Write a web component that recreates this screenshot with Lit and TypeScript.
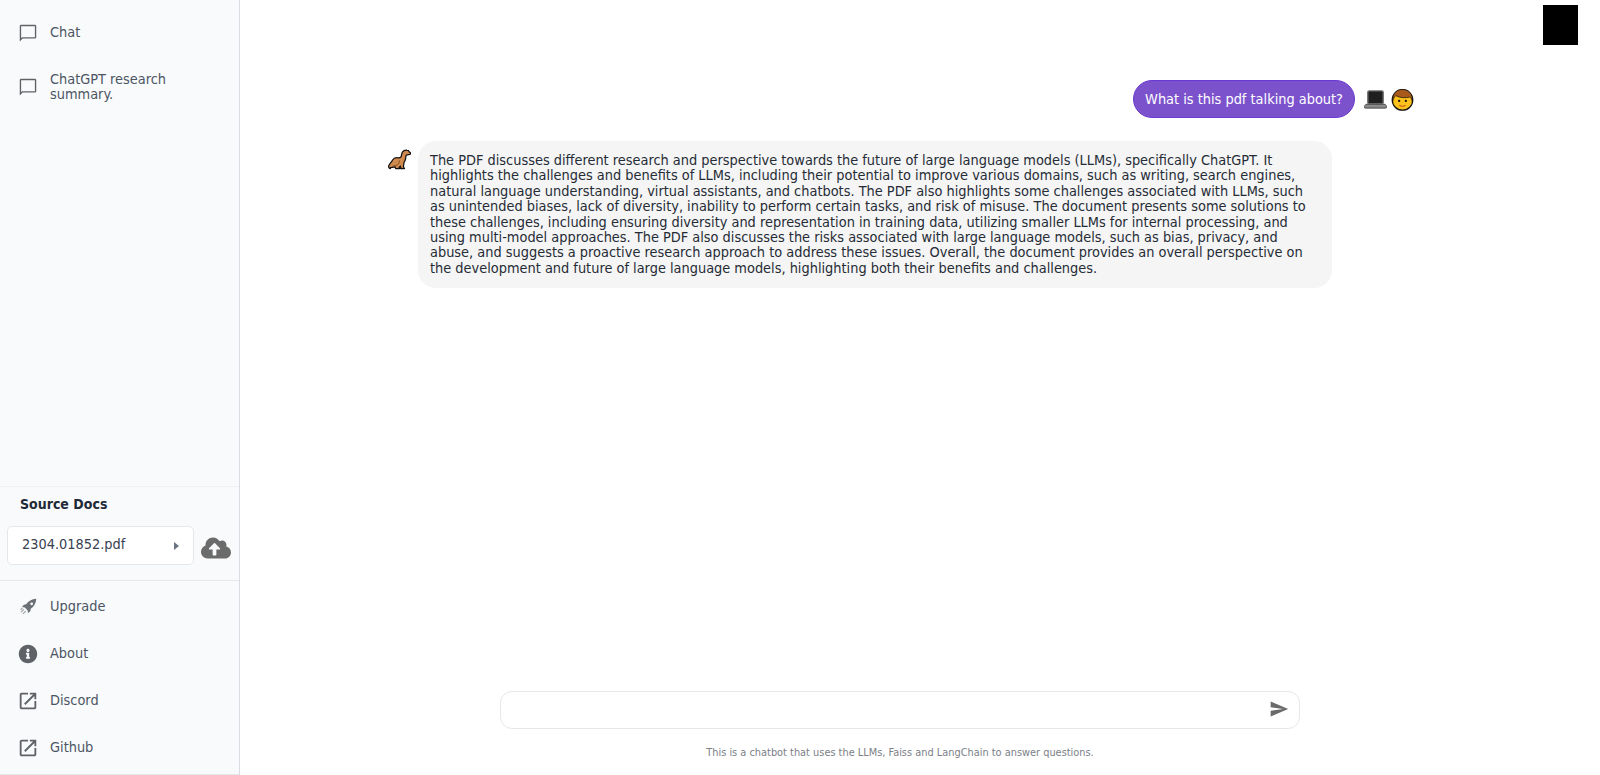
import { LitElement, html, css, svg } from "lit";
import { customElement } from "lit/decorators.js";

const icon = (d: string, vb = "0 0 24 24", cls = "ic") =>
  html`<svg class=${cls} viewBox=${vb} fill="currentColor"><path d=${d}></path></svg>`;

const CHAT = "M3 4.500C3 3.700 3.700 3 4.500 3h15c.8 0 1.500.7 1.500 1.500v12c0 .8-.7 1.500-1.500 1.500H6.200L3 21.200V4.500zM4.500 4.500v13l1.200-1h13.800v-12H4.500z";
const EXT = "M19 19H5V5h7V3H5c-1.110 0-2 .9-2 2v14c0 1.100.89 2 2 2h14c1.100 0 2-.9 2-2v-7h-2v7zM14 3v2h3.590l-9.830 9.830 1.410 1.410L19 6.410V10h2V3h-7z";
const INFO = "M256 8C119 8 8 119.100 8 256c0 137 111 248 248 248s248-111 248-248C504 119.100 393 8 256 8zm0 110c23.200 0 42 18.800 42 42s-18.800 42-42 42-42-18.800-42-42 18.800-42 42-42zm56 254c0 6.600-5.400 12-12 12h-88c-6.600 0-12-5.400-12-12v-24c0-6.600 5.400-12 12-12h12v-64h-12c-6.600 0-12-5.400-12-12v-24c0-6.600 5.400-12 12-12h64c6.600 0 12 5.400 12 12v100h12c6.600 0 12 5.400 12 12v24z";
const CLOUD = "M537.600 226.600c4.100-10.700 6.400-22.400 6.400-34.600 0-53-43-96-96-96-19.700 0-38.100 6-53.300 16.200C367 64.200 315.300 32 256 32c-88.400 0-160 71.600-160 160 0 2.700.1 5.400.2 8.100C40.200 219.800 0 273.200 0 336c0 79.500 64.500 144 144 144h368c70.700 0 128-57.300 128-128 0-61.900-44-113.600-102.400-125.400zM393.400 288H328v112c0 8.800-7.200 16-16 16h-48c-8.800 0-16-7.200-16-16V288h-65.400c-14.300 0-21.400-17.200-11.300-27.300l105.400-105.400c6.200-6.200 16.400-6.200 22.600 0l105.400 105.400c10.100 10.100 2.900 27.300-11.300 27.300z";
const SEND = "M2.010 21L23 12 2.010 3 2 10l15 2-15 2z";

const rocket = html`<svg class="ic rocket" viewBox="0 0 24 24">
  <path fill="currentColor" fill-rule="evenodd" d="M20.800 3C16 3.500 12.500 5.500 10 9L7.500 9.500 5.500 12l3 .5 3 3 .5 3 2.500-2 .5-2.500c3.500-2.500 5.500-6 6-10.500zM16 7a1.500 1.500 0 1 1 0 3 1.500 1.500 0 0 1 0-3z"></path>
  <path fill="none" stroke="currentColor" stroke-width="1.200" opacity=".65" d="M7.500 14.500l-3 3M9.500 16.500l-3 3M6 13l-2 2"></path>
</svg>`;

const laptop = svg`<rect x="4" y="3" width="16" height="13.500" rx="1.500" fill="#1f1f1f" stroke="#6b6b6b" stroke-width="1.500"/><path d="M2 17h20l2 2.500c0 .8-.6 1.500-1.500 1.500h-21C.6 21 0 20.300 0 19.500z" fill="#8a8a8a" stroke="#333" stroke-width=".8"/>`;
const boy = svg`<circle cx="12" cy="12.500" r="10.700" fill="#fcc21b" stroke="#111" stroke-width="1.300"/><path d="M1.800 14C.8 6 6 1.500 12 1.500S23.200 6 22.200 14c-.4-2-1-3.500-2.400-4.500C16 10.500 9 10.500 5 8 3.200 9.500 2.300 11.500 1.800 14z" fill="#a8591c" stroke="#111" stroke-width=".7"/><circle cx="8.500" cy="13.500" r="1.200" fill="#111"/><circle cx="15.500" cy="13.500" r="1.200" fill="#111"/><path d="M8.800 18c2 1.300 4.400 1.300 6.400 0" fill="none" stroke="#c0571b" stroke-width="1.200"/>`;
const dino = svg`<path d="M2.500 21.500c-1.800-.4-2.300-2.300-1.500-3.500 1.200-1.800 2.800-3.700 3.800-5.500C6 10.500 8 9.800 10.500 10.300c1.500.3 2.500-.3 3.200-1.300.6-1.500.4-3.200 1.300-4.700C16 2.800 18 2 19.800 2.200c1.400.1 2.100 1 2.500 1.900l1.200.9c.4.800 0 1.500-.9 1.700l-3.600.7c-.6 1.700-.3 3.600-1.100 5.300-.4 1-.7 1.500-1.100 2l-.3 1.800c-.2 1.300-.4 2.500-.3 3.500l1 1.500h-3.700l-.5-2.500-1.500 1 .7 1.500H8l-.5-1.800c-1.500.4-3.300.8-5 .8z" fill="#d08a4e" stroke="#111" stroke-width="1.300" stroke-linejoin="round"/><path d="M4.500 19c2-.5 5-.5 6.500-2.500 1-1.300.5-2.500 1-3.500" fill="none" stroke="#7a4a22" stroke-width="1"/>`;

@customElement("app-root")
export class AppRoot extends LitElement {
  static styles = css`
    :host { display: flex; height: 775px; overflow: hidden; background: #fff;
      font-family: "DejaVu Sans Condensed", "DejaVu Sans", sans-serif; font-size: 14.400px; color: #1f2937; position: relative; }
    * { box-sizing: border-box; }
    .side { width: 240px; flex: none; background: #f9fafb; border-right: 1px solid #d9dde3; display: flex; flex-direction: column; height: 775px; }
    .threads { flex: 1; padding-top: 9px; display: flex; flex-direction: column; }
    .item { display: flex; align-items: center; gap: 11px; padding: 0 17px; height: 47px; color: #4b5563; line-height: 15px; flex: none; }
    .item.tall { height: 61px; }
    .ic { width: 22px; height: 22px; flex: none; color: #5f6368; }
    .rocket { color: #6b6f76; }
    .docs { border-top: 1px solid #f0f1f4; height: 94px; padding: 0 7px; flex: none; }
    .docs h4 { margin: 0; padding: 9px 13px 0; height: 39px; font-size: 14px; font-weight: 700; color: #1f2937; line-height: 16px; }
    .row { display: flex; align-items: center; gap: 7px; }
    .select { width: 187px; height: 39px; background: #fff; border: 1px solid #e5e7eb; border-radius: 5px; display: flex; align-items: center; justify-content: space-between; padding: 0 14px 3px; color: #374151; }
    .tri { width: 0; height: 0; border-left: 5px solid #6b7280; border-top: 4.500px solid transparent; border-bottom: 4.500px solid transparent; margin-top: 3px; }
    .cloud { width: 30px; height: 24px; color: #6b6b6b; margin-top: 5px; flex: none; }
    .links { border-top: 1.500px solid #e5e7eb; padding-top: 2px; flex: none; height: 195px; border-bottom: 1px solid #e5e7eb; }
    .main { width: 1320px; flex: none; display: flex; flex-direction: column; }
    .log { flex: 1; padding-top: 80px; display: flex; flex-direction: column; align-items: center; }
    .wrap { width: 1030px; display: flex; flex-direction: column; gap: 23px; }
    .user { display: flex; justify-content: flex-end; gap: 9px; align-items: center; padding-right: 1px; }
    .ubub { background: #7c52cc; border: 1px solid #6a3bd0; color: #fff; border-radius: 19px; height: 38px; padding: 0 11px; display: flex; align-items: center; white-space: nowrap; }
    .emo { display: flex; gap: 4px; align-items: center; }
    .emo svg, .bot > svg { width: 23px; height: 23px; flex: none; }
    .bot { display: flex; gap: 7px; align-items: flex-start; padding-left: 3px; }
    .bot > svg { margin-top: 7px; }
    .bbub { width: 914px; background: #f5f5f5; border-radius: 18px; padding: 12px; line-height: 15.400px; color: #262c36; height: 147px; white-space: nowrap; }
    .foot { flex: none; height: 84px; display: flex; flex-direction: column; align-items: center; }
    .input { width: 800px; height: 38px; border: 1px solid #e5e7eb; border-radius: 12px; display: flex; align-items: center; justify-content: flex-end; padding: 0 10px 2px 0; background: #fff; flex: none; }
    .input svg { width: 20px; height: 20px; color: #6b6b6b; }
    .note { margin-top: 17px; font-size: 10.900px; line-height: 14px; color: #7b8088; }
    .sq { position: absolute; top: 5px; left: 1543px; width: 35px; height: 40px; background: #000; }
  `;

  render() {
    return html`
      <aside class="side">
        <div class="threads">
          <div class="item">${icon(CHAT)}<span>Chat</span></div>
          <div class="item tall">${icon(CHAT)}<span>ChatGPT research<br />summary.</span></div>
        </div>
        <div class="docs">
          <h4>Source Docs</h4>
          <div class="row">
            <div class="select"><span>2304.01852.pdf</span><i class="tri"></i></div>
            ${icon(CLOUD, "0 0 640 512", "cloud")}
          </div>
        </div>
        <div class="links">
          <div class="item">${rocket}<span>Upgrade</span></div>
          <div class="item">${icon(INFO, "-40 -40 592 592")}<span>About</span></div>
          <div class="item">${icon(EXT)}<span>Discord</span></div>
          <div class="item">${icon(EXT)}<span>Github</span></div>
        </div>
      </aside>
      <main class="main">
        <div class="log">
          <div class="wrap">
            <div class="user">
              <div class="ubub">What is this pdf talking about?</div>
              <div class="emo">
                <svg viewBox="0 0 24 24">${laptop}</svg>
                <svg viewBox="0 0 24 24">${boy}</svg>
              </div>
            </div>
            <div class="bot">
              <svg viewBox="0 0 24 24">${dino}</svg>
              <div class="bbub">
                The PDF discusses different research and perspective towards the future of large language models (LLMs), specifically ChatGPT. It<br />
                highlights the challenges and benefits of LLMs, including their potential to improve various domains, such as writing, search engines,<br />
                natural language understanding, virtual assistants, and chatbots. The PDF also highlights some challenges associated with LLMs, such<br />
                as unintended biases, lack of diversity, inability to perform certain tasks, and risk of misuse. The document presents some solutions to<br />
                these challenges, including ensuring diversity and representation in training data, utilizing smaller LLMs for internal processing, and<br />
                using multi-model approaches. The PDF also discusses the risks associated with large language models, such as bias, privacy, and<br />
                abuse, and suggests a proactive research approach to address these issues. Overall, the document provides an overall perspective on<br />
                the development and future of large language models, highlighting both their benefits and challenges.
              </div>
            </div>
          </div>
        </div>
        <div class="foot">
          <div class="input">${icon(SEND)}</div>
          <div class="note">This is a chatbot that uses the LLMs, Faiss and LangChain to answer questions.</div>
        </div>
      </main>
      <div class="sq"></div>
    `;
  }
}
